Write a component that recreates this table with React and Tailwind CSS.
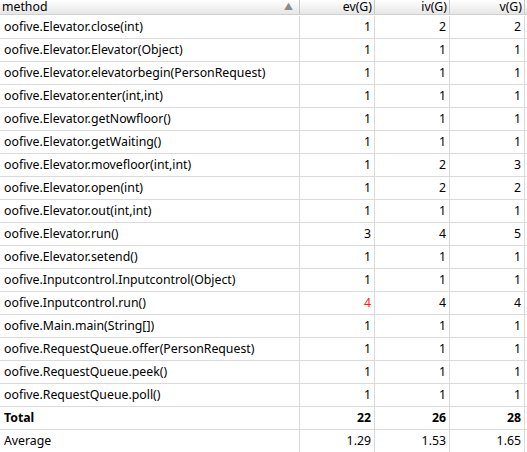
import React from 'react';

const rows = [
  ['oofive.Elevator.close(int)', 1, 2, 2],
  ['oofive.Elevator.Elevator(Object)', 1, 1, 1],
  ['oofive.Elevator.elevatorbegin(PersonRequest)', 1, 1, 1],
  ['oofive.Elevator.enter(int,int)', 1, 1, 1],
  ['oofive.Elevator.getNowfloor()', 1, 1, 1],
  ['oofive.Elevator.getWaiting()', 1, 1, 1],
  ['oofive.Elevator.movefloor(int,int)', 1, 2, 3],
  ['oofive.Elevator.open(int)', 1, 2, 2],
  ['oofive.Elevator.out(int,int)', 1, 1, 1],
  ['oofive.Elevator.run()', 3, 4, 5],
  ['oofive.Elevator.setend()', 1, 1, 1],
  ['oofive.Inputcontrol.Inputcontrol(Object)', 1, 1, 1],
  ['oofive.Inputcontrol.run()', 4, 4, 4, true],
  ['oofive.Main.main(String[])', 1, 1, 1],
  ['oofive.RequestQueue.offer(PersonRequest)', 1, 1, 1],
  ['oofive.RequestQueue.peek()', 1, 1, 1],
  ['oofive.RequestQueue.poll()', 1, 1, 1],
];

const font = { fontFamily: '"Noto Sans", "Noto Sans CJK SC", sans-serif' };

const Row = ({ cells, bold, warn, first }) => (
  <div className={`flex h-[23px] border-b border-[#dadada] ${first ? 'mt-px' : ''} ${bold ? 'font-bold' : ''}`}>
    <div className="w-[300px] shrink-0 border-r border-[#dadada] pl-[4px] flex items-center">{cells[0]}</div>
    {cells.slice(1).map((v, i) => (
      <div
        key={i}
        className={`w-[75px] shrink-0 border-r border-[#dadada] pr-[3px] flex items-center justify-end ${warn && i === 0 ? 'text-[#ff1a1a]' : ''}`}
      >
        {v}
      </div>
    ))}
  </div>
);

export default function App() {
  return (
    <div className="w-[527px] h-[452px] overflow-hidden bg-white text-[12.3px] text-black leading-[16px]" style={font}>
      <div className="flex h-[15px] bg-gradient-to-b from-white to-[#e6e6e6] border-b border-[#d0d0d0] leading-[14px]">
        <div className="w-[300px] shrink-0 border-r border-[#c8c8c8] pl-[2px] flex items-center justify-between pr-[6px]">
          <span>method</span>
          <span className="text-[9px] text-[#8a8a8a]">▲</span>
        </div>
        {['ev(G)', 'iv(G)', 'v(G)'].map((h) => (
          <div key={h} className="w-[75px] shrink-0 border-r border-[#c8c8c8] pr-[2px] flex items-center justify-end">
            {h}
          </div>
        ))}
      </div>
      {rows.map((r, i) => (
        <Row key={r[0]} cells={r} warn={r[4]} first={i === 0} />
      ))}
      <Row cells={['Total', 22, 26, 28]} bold />
      <Row cells={['Average', '1.29', '1.53', '1.65']} />
    </div>
  );
}
